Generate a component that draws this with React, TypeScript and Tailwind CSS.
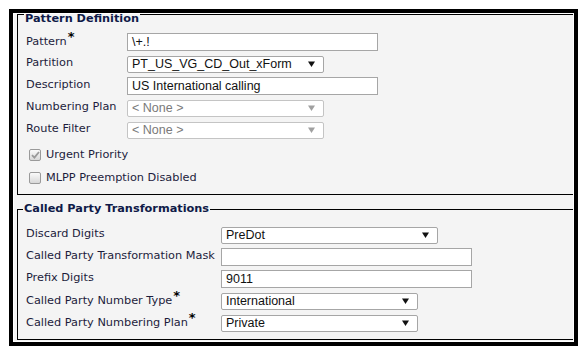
import React from "react";

const labelFont = { fontFamily: '"DejaVu Sans", Verdana, sans-serif' };
const fieldFont = { fontFamily: '"Liberation Sans", Arial, sans-serif' };

function Star() {
  return <span className="ml-[1px] relative -top-[4px] text-[13px] font-bold text-black">*</span>;
}

function Arrow({ disabled }: { disabled?: boolean }) {
  return (
    <svg width="7" height="6" viewBox="0 0 7 6" className="shrink-0">
      <path d="M0 0.5 H7 L3.5 6 Z" fill={disabled ? "#a0a0a0" : "#111"} />
    </svg>
  );
}

function TextBox({ value = "", width }: { value?: string; width: string }) {
  return (
    <div
      className={`${width} h-[18px] border border-[#a6a6a6] bg-white flex items-center px-[4px] text-[12.5px] text-[#111] leading-none`}
      style={fieldFont}
    >
      {value}
    </div>
  );
}

function SelectBox({ value, width, disabled }: { value: string; width: string; disabled?: boolean }) {
  return (
    <div
      className={`${width} h-[17px] rounded-[2px] border bg-white flex items-center justify-between pl-[4px] pr-[8px] text-[12.5px] leading-none ${
        disabled ? "border-[#c4c4c4] text-[#7a7a7a]" : "border-[#a6a6a6] text-[#111]"
      }`}
      style={fieldFont}
    >
      <span>{value}</span>
      <Arrow disabled={disabled} />
    </div>
  );
}

function Row({ label, star, labelW, children }: { label: string; star?: boolean; labelW: string; children: React.ReactNode }) {
  return (
    <div className="h-[22px] flex items-center">
      <div className={`${labelW} shrink-0 text-[11.3px] text-[#1c1c3c] leading-none -mt-[2px]`} style={labelFont}>
        {label}
        {star && <Star />}
      </div>
      {children}
    </div>
  );
}

function Check({ checked, label }: { checked?: boolean; label: string }) {
  return (
    <div className="h-[23px] flex items-center pl-[3px] gap-[5px]">
      <div className="w-[12px] h-[12px] rounded-[2px] border border-[#9a9a9a] bg-gradient-to-b from-[#fafafa] to-[#d8d8d8] flex items-center justify-center">
        {checked && (
          <svg width="9" height="8" viewBox="0 0 9 8">
            <path d="M1 4.2 L3.4 6.6 L8 1" stroke="#9a9a9a" strokeWidth="1.8" fill="none" />
          </svg>
        )}
      </div>
      <span className="text-[11.3px] text-[#1c1c3c] leading-none" style={labelFont}>
        {label}
      </span>
    </div>
  );
}

export default function App() {
  return (
    <div className="w-[585px] h-[354px] bg-white pl-[9px] pt-[9px]">
      <div className="w-[569px] h-[337px] border-[4px] border-black">
        <div className="h-full border border-white bg-[#f4f4f4] overflow-hidden">
          {/* Pattern Definition */}
          <div className="ml-[3px] h-[181px] border-l border-b border-black">
            <div className="h-[13px] flex items-start">
              <div className="w-[6px] border-t border-black" />
              <span
                className="px-[1px] -mt-[2px] text-[11.3px] font-bold text-[#0f1a48] leading-[14px]"
                style={labelFont}
              >
                Pattern Definition
              </span>
              <div className="flex-1 border-t border-black" />
            </div>
            <div className="pl-[8px] pt-[4px]">
              <Row label="Pattern" star labelW="w-[101px]">
                <TextBox value="\+.!" width="w-[251px]" />
              </Row>
              <Row label="Partition" labelW="w-[101px]">
                <SelectBox value="PT_US_VG_CD_Out_xForm" width="w-[197px]" />
              </Row>
              <Row label="Description" labelW="w-[101px]">
                <TextBox value="US International calling" width="w-[251px]" />
              </Row>
              <Row label="Numbering Plan" labelW="w-[101px]">
                <SelectBox value="< None >" width="w-[197px]" disabled />
              </Row>
              <Row label="Route Filter" labelW="w-[101px]">
                <SelectBox value="< None >" width="w-[197px]" disabled />
              </Row>
              <div className="h-[2px]" />
              <Check checked label="Urgent Priority" />
              <Check label="MLPP Preemption Disabled" />
            </div>
          </div>

          {/* Called Party Transformations */}
          <div className="ml-[3px] mt-[7px]">
            <div className="h-[14px] flex items-center">
              <div className="w-[6px] h-[7px] self-end border-t border-l border-black" />
              <span className="px-[1px] text-[11.3px] font-bold text-[#0f1a48] leading-[14px]" style={labelFont}>
                Called Party Transformations
              </span>
              <div className="flex-1 h-px bg-black" />
            </div>
            <div className="h-[124px] border-l border-b border-black pl-[8px] pt-[8px]">
              <Row label="Discard Digits" labelW="w-[195px]">
                <SelectBox value="PreDot" width="w-[217px]" />
              </Row>
              <Row label="Called Party Transformation Mask" labelW="w-[195px]">
                <TextBox width="w-[251px]" />
              </Row>
              <Row label="Prefix Digits" labelW="w-[195px]">
                <TextBox value="9011" width="w-[251px]" />
              </Row>
              <Row label="Called Party Number Type" star labelW="w-[195px]">
                <SelectBox value="International" width="w-[197px]" />
              </Row>
              <Row label="Called Party Numbering Plan" star labelW="w-[195px]">
                <SelectBox value="Private" width="w-[197px]" />
              </Row>
            </div>
          </div>
        </div>
      </div>
    </div>
  );
}
